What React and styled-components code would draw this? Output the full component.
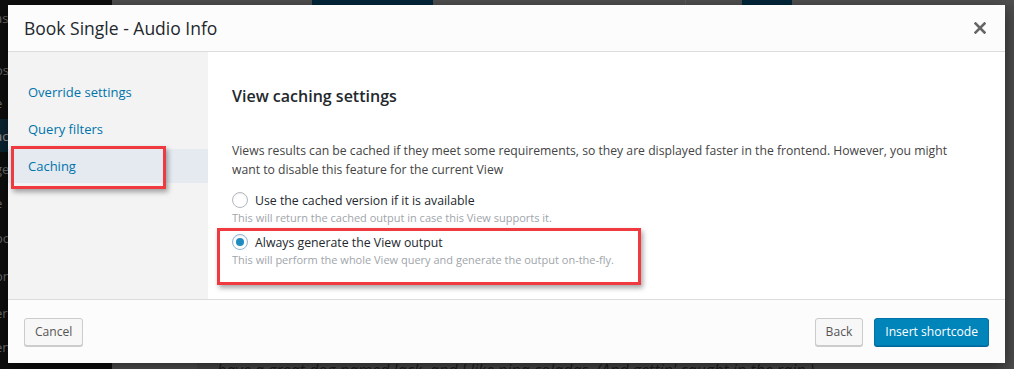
import styled, { createGlobalStyle } from 'styled-components';

const GlobalStyle = createGlobalStyle`
  html, body { margin: 0; padding: 0; background: #4c4c4c; }
  body { font-family: "Open Sans", "Noto Sans", sans-serif; }
  * { box-sizing: border-box; }
`

const Screen = styled.div`
  position: relative;
  width: 1014px;
  height: 369px;
  overflow: hidden;
  display: grid;
  grid-template-columns: 112px 1fr;
  background: #4c4c4c;
`

const AdminMenu = styled.ul`
  margin: 0;
  padding: 8px 0 0;
  list-style: none;
  background: #0e0e0e;
`

const AdminItem = styled.li`
  height: ${p => p.h || 33}px;
  display: flex;
  align-items: center;
  margin-left: -5px;
  font-size: 13px;
  color: ${p => (p.current ? '#9a9a9a' : '#6c6c6c')};
  background: ${p => (p.current ? '#0b2533' : 'transparent')};
`

const Editor = styled.div`
  display: flex;
  flex-direction: column;
`

const EditorTabs = styled.div`
  height: 5px;
  display: flex;
`

const Tab = styled.div`
  width: ${p => p.w}px;
  background: ${p => (p.dark ? '#00263a' : '#4f4f4f')};
  border-right: ${p => (p.line ? '1px solid #5a5a5a' : 'none')};
`

const EditorBody = styled.div`
  flex: 1;
  display: flex;
  align-items: flex-end;
  padding-left: 105px;
  background: linear-gradient(to right, #545454 0 85px, #4c4c4c 85px);
`

const EditorText = styled.p`
  margin: 0 0 -12px;
  font-size: 16px;
  font-style: italic;
  color: #1e1e1e;
  white-space: nowrap;
`

const Modal = styled.div`
  position: absolute;
  left: 8px;
  top: 5px;
  width: 997px;
  height: 358px;
  display: flex;
  flex-direction: column;
  background: #fff;
  box-shadow: 0 5px 15px rgba(0, 0, 0, 0.5);
`

const Header = styled.header`
  height: 47px;
  flex: none;
  display: flex;
  align-items: center;
  justify-content: space-between;
  padding: 0 18px 0 16px;
  background: #fcfcfc;
  border-bottom: 1px solid #ddd;
`

const Title = styled.h1`
  margin: 0;
  font-size: 17.5px;
  font-weight: 400;
  color: #23282d;
`

const CloseButton = styled.button`
  width: 14px;
  height: 14px;
  padding: 0;
  border: 0;
  background: none;
  color: #666;
  display: flex;
  align-items: center;
  justify-content: center;
`

const Body = styled.div`
  flex: 1;
  display: grid;
  grid-template-columns: 200px 1fr;
`

const Sidebar = styled.nav`
  background: #f3f3f3;
  padding-top: 23px;
  display: flex;
  flex-direction: column;
  gap: 3px;
`

const MenuItem = styled.a`
  position: relative;
  height: 34px;
  display: flex;
  align-items: center;
  padding-left: 20px;
  font-size: 13px;
  color: #0073aa;
  text-decoration: none;
  background: ${p => (p.active ? '#e5eaf1' : 'transparent')};

  ${p => p.marked && `
    &::after {
      content: '';
      position: absolute;
      left: 3px;
      top: -3px;
      width: 149px;
      height: 37px;
      border: 3px solid #ef3a3f;
      box-shadow: 2px 3px 5px rgba(0, 0, 0, 0.35);
    }
  `}
`

const Content = styled.section`
  padding: 33px 40px 0 24px;
`

const Heading = styled.h2`
  margin: 0 0 34px;
  font-size: 16px;
  font-weight: 600;
  color: #23282d;
  line-height: 22px;
`

const Text = styled.p`
  margin: 0 0 11px;
  font-size: 12.2px;
  line-height: 19px;
  color: #444;
`

const Option = styled.div`
  position: relative;
  width: fit-content;
  margin-bottom: 6px;

  ${p => p.marked && `
    &::after {
      content: '';
      position: absolute;
      left: -15px;
      top: -4px;
      width: 418px;
      height: 51px;
      border: 3px solid #ef3a3f;
      box-shadow: 2px 3px 5px rgba(0, 0, 0, 0.35);
    }
  `}
`

const OptionLabel = styled.label`
  display: flex;
  align-items: center;
  gap: 7px;
  height: 20px;
  font-size: 12.3px;
  color: #23282d;
`

const Radio = styled.span`
  width: 16px;
  height: 16px;
  border-radius: 50%;
  border: 1px solid ${p => (p.checked ? '#8fb4d6' : '#b4b9be')};
  background: #fff;
  box-shadow: inset 0 1px 2px rgba(0, 0, 0, 0.07);
  display: flex;
  align-items: center;
  justify-content: center;

  &::before {
    content: '';
    width: 8px;
    height: 8px;
    border-radius: 50%;
    background: ${p => (p.checked ? '#1e8cbe' : 'transparent')};
  }
`

const Hint = styled.div`
  font-size: 11px;
  line-height: 16px;
  color: #a0a5aa;
`

const Footer = styled.footer`
  height: 64px;
  flex: none;
  display: flex;
  align-items: center;
  justify-content: space-between;
  padding: 0 16px;
  background: #fcfcfc;
  border-top: 1px solid #ddd;
`

const Actions = styled.div`
  display: flex;
  gap: 11px;
`

const Button = styled.button`
  height: 28px;
  padding: 0 10px;
  border-radius: 3px;
  font-family: inherit;
  font-size: 12.1px;
  line-height: 26px;
  border: 1px solid ${p => (p.primary ? '#0073aa' : '#ccc')};
  background: ${p => (p.primary ? '#0085ba' : '#f7f7f7')};
  color: ${p => (p.primary ? '#fff' : '#555')};
  box-shadow: 0 1px 0 ${p => (p.primary ? '#006799' : '#ccc')};
`

const adminItems = [
  ['as', 20], ['', 25], ['os', 33], ['e', 33], ['ac', 33, true], ['ge', 33], ['e', 35], ['oo', 36], ['on', 40], ['er', 34], ['en', 33],
]

function App() {
  return (
    <>
      <GlobalStyle />
      <Screen>
        <AdminMenu>
          {adminItems.map(([t, h, current], i) => (
            <AdminItem key={i} h={h} current={current}>{t}</AdminItem>
          ))}
        </AdminMenu>
        <Editor>
          <EditorTabs>
            <Tab w={200} />
            <Tab w={121} dark />
            <Tab w={253} line />
            <Tab w={56} />
            <Tab w={50} dark />
            <Tab w={222} />
          </EditorTabs>
          <EditorBody>
            <EditorText>have a great dog named Jack, and I like pina coladas. (And gettin' caught in the rain.)</EditorText>
          </EditorBody>
        </Editor>

        <Modal>
          <Header>
            <Title>Book Single - Audio Info</Title>
            <CloseButton aria-label="Close">
              <svg width="12" height="12" viewBox="0 0 12 12">
                <path d="M1.5 1.5 L10.5 10.5 M10.5 1.5 L1.5 10.5" stroke="currentColor" strokeWidth="2.6" strokeLinecap="square" />
              </svg>
            </CloseButton>
          </Header>
          <Body>
            <Sidebar>
              <MenuItem href="#">Override settings</MenuItem>
              <MenuItem href="#">Query filters</MenuItem>
              <MenuItem href="#" active marked>Caching</MenuItem>
            </Sidebar>
            <Content>
              <Heading>View caching settings</Heading>
              <Text>
                Views results can be cached if they meet some requirements, so they are displayed faster in the frontend. However, you might want to disable this feature for the current View
              </Text>
              <Option>
                <OptionLabel><Radio />Use the cached version if it is available</OptionLabel>
                <Hint>This will return the cached output in case this View supports it.</Hint>
              </Option>
              <Option marked>
                <OptionLabel><Radio checked />Always generate the View output</OptionLabel>
                <Hint>This will perform the whole View query and generate the output on-the-fly.</Hint>
              </Option>
            </Content>
          </Body>
          <Footer>
            <Button>Cancel</Button>
            <Actions>
              <Button>Back</Button>
              <Button primary>Insert shortcode</Button>
            </Actions>
          </Footer>
        </Modal>
      </Screen>
    </>
  )
}

export default App
